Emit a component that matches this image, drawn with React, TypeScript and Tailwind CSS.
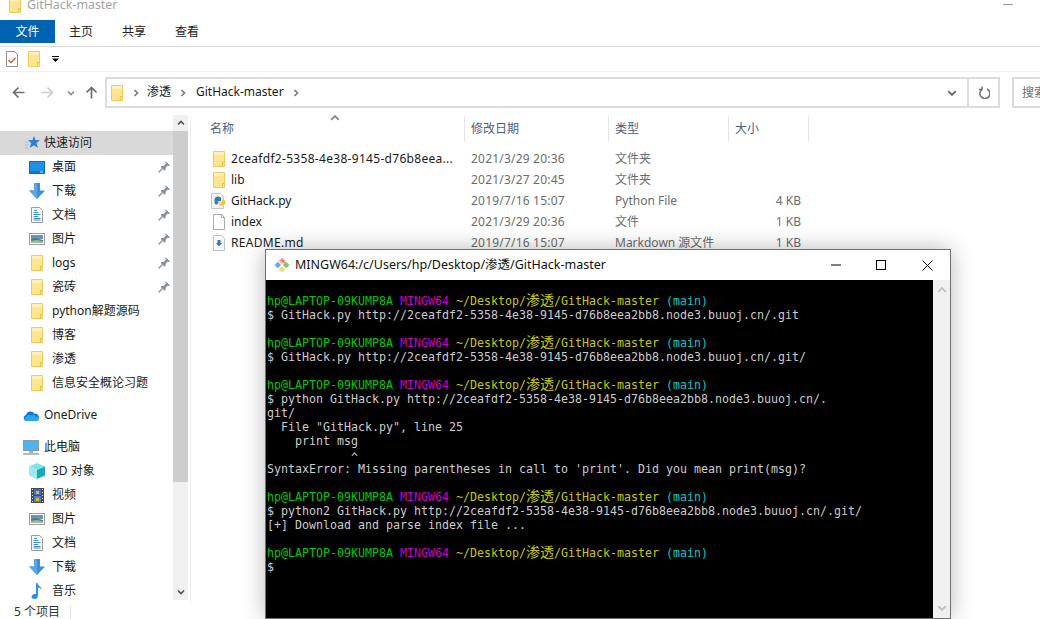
import React from 'react';

const uiFont = { fontFamily: '"Noto Sans", "Noto Sans CJK SC", sans-serif' };

const Folder = () => (
  <svg width="14" height="18" viewBox="0 0 14 18" className="shrink-0">
    <path d="M1.500 1.500h11v15h-11z" fill="#fee58f" stroke="#eecb5c" />
    <path d="M10.500 16.500v-4h2" fill="none" stroke="#e8bf45" />
    <path d="M2 2h10v3H2z" fill="#fff0ba" />
  </svg>
);

const Pin = () => (
  <svg width="12" height="12" viewBox="0 0 12 12">
    <path d="M7.500 0L12 4.500l-1.200.5-1.300-.2-2 2.200.1 2-1 .8L2.700 5.900l.8-1 2 .1 2.200-2-.2-1.300z" fill="#85909a" />
    <path d="M4.500 7.500L.5 11.500" stroke="#85909a" strokeWidth="1.300" />
  </svg>
);

const Desktop = () => (
  <svg width="16" height="13" viewBox="0 0 16 13">
    <rect x="0.500" y="0.500" width="15" height="12" fill="#1e90e8" stroke="#0b6cc0" />
    <path d="M1 11h14" stroke="#0a5da8" />
    <path d="M11 11h3" stroke="#bfe3fb" />
  </svg>
);

const Download = () => (
  <svg width="16" height="16" viewBox="0 0 16 16">
    <path d="M5 0h6v7.500h5L8 16 0 7.500h5z" fill="#3d8edb" />
    <path d="M5 0h3v16L0 7.500h5z" fill="#5ba6ea" />
  </svg>
);

const Doc = () => (
  <svg width="12" height="16" viewBox="0 0 12 16">
    <path d="M.5.500h8l3 3v12H.5z" fill="#fff" stroke="#9a9a9a" />
    <path d="M6 3.500h-3M7.500 5.500h-5M9.500 7.500h-7M7 9.500H2.500M9.500 11.500h-7M9.500 13h-7" stroke="#3a8fd6" />
  </svg>
);

const Picture = () => (
  <svg width="16" height="12" viewBox="0 0 16 12">
    <rect x="0.500" y="0.500" width="15" height="11" fill="#fff" stroke="#9c9c9c" />
    <rect x="2" y="2" width="12" height="4" fill="#6d93c5" />
    <path d="M2 6l4-1 8 2v3H2z" fill="#4f7f6d" />
    <path d="M2 8l6-1 6 1.500V10H2z" fill="#a4b9a0" />
  </svg>
);

const Star = () => (
  <svg width="15" height="14" viewBox="0 0 15 14">
    <path d="M9 0l1.500 4 4.500.2-3.500 2.900L12.800 12 9 9.300 4.700 12l1.500-4.900L3 4.200l4.500-.2z" fill="#2f7fd1" />
    <path d="M0 6h3M0 9h3M0 12h3" stroke="#8fc1ee" />
  </svg>
);

const Cloud = () => (
  <svg width="16" height="11" viewBox="0 0 16 11">
    <path d="M3.500 11A3 3 0 0 1 3 5.100 4.500 4.500 0 0 1 11.400 3.800 3.600 3.600 0 0 1 13 11z" fill="#0f78d4" />
    <path d="M3.500 11A2 2 0 0 1 3.300 7 3 3 0 0 1 8 5.500c2-1.200 3.600-.6 4.200 1 2-.3 3.800.9 3.800 2.300 0 1.200-1 2.200-2.500 2.200z" fill="#28a8ea" />
  </svg>
);

const Pc = () => (
  <svg width="16" height="15" viewBox="0 0 16 15">
    <rect x="0.500" y="0.500" width="15" height="10" fill="#48b5ee" stroke="#8a9aa8" />
    <path d="M6 11h4v2H6z" fill="#9eb3c4" />
    <path d="M0 14h16" stroke="#8ea3b5" strokeWidth="1.500" />
  </svg>
);

const Cube = () => (
  <svg width="16" height="16" viewBox="0 0 16 16">
    <path d="M8 0l8 3.500-8 3.500L0 3.500z" fill="#7fe3ea" />
    <path d="M0 3.500l8 3.500v9l-8-3.500z" fill="#9fe9ee" />
    <path d="M16 3.500L8 7v9l8-3.500z" fill="#18a9bd" />
  </svg>
);

const Film = () => (
  <svg width="13" height="15" viewBox="0 0 13 15">
    <rect width="13" height="15" fill="#4a4a4a" />
    <rect x="3" y="1" width="7" height="6" fill="#3f6fc4" />
    <rect x="3" y="8" width="7" height="6" fill="#4f7fd0" />
    <path d="M5 3h3v3H5zM5 10h3v3H5z" fill="#e6b422" />
    <path d="M1 1h1v1H1zM1 4h1v1H1zM1 7h1v1H1zM1 10h1v1H1zM1 13h1v1H1zM11 1h1v1h-1zM11 4h1v1h-1zM11 7h1v1h-1zM11 10h1v1h-1zM11 13h1v1h-1z" fill="#ddd" />
  </svg>
);

const Music = () => (
  <svg width="12" height="16" viewBox="0 0 12 16">
    <path d="M5 0h1.500c.3 2.500 4 3.500 4.500 7-1.200-1.600-2.700-2.400-4-2.600V13c0 1.800-1.700 3-3.600 3C1.700 16 .5 15 .5 13.700c0-1.500 1.700-2.700 3.500-2.700.4 0 .7 0 1 .1z" fill="#2f8fe0" />
  </svg>
);

const PyFile = () => (
  <svg width="15" height="16" viewBox="0 0 15 16">
    <path d="M.5.500h9l3 3v12h-12z" fill="#f3f4f5" stroke="#c4c8cc" />
    <path d="M3.500 7c0-2.500 1.500-3.500 3.500-3.500s3 .8 3 2.200v2.300H6.500v.8h3.500c-2 .2-3.500.7-3.700 2.700H4.500C3.700 11 3.500 9 3.500 7z" fill="#3a78ad" />
    <path d="M14.500 9c0 2.500-1.500 3.500-3.500 3.500H10.500c-2 0-3-.6-3-2V10.500H11v-.8H8c2-.2 3-1 3.200-3H13.200c.9.500 1.300 1.300 1.300 2.300z" fill="#f2c63c" />
  </svg>
);

const BlankFile = () => (
  <svg width="12" height="16" viewBox="0 0 12 16">
    <path d="M.5.500h8l3 3v12H.5z" fill="#fff" stroke="#a8adb2" />
    <path d="M8.500.500v3h3" fill="none" stroke="#a8adb2" />
  </svg>
);

const MdFile = () => (
  <svg width="12" height="16" viewBox="0 0 12 16">
    <path d="M.5.500h8l3 3v12H.5z" fill="#f8f9fa" stroke="#bcc3c9" />
    <path d="M4.500 5h3v3H9l-3 3.500L3 8h1.500z" fill="#3a77ad" />
  </svg>
);

const GitLogo = () => (
  <svg width="16" height="16" viewBox="0 0 16 16">
    <path d="M8 .5l3.300 3.300L8 7.100 4.700 3.800z" fill="#f3a29a" />
    <path d="M12.200 4.800L15.500 8l-3.300 3.300L8.900 8z" fill="#84c46a" />
    <path d="M8 8.900l3.300 3.300L8 15.500l-3.300-3.300z" fill="#f7d873" />
    <path d="M3.800 4.800L7.100 8l-3.300 3.300L.5 8z" fill="#6fa5ec" />
    <path d="M8 2.800l3 3" stroke="#e2564a" strokeWidth="1.200" />
  </svg>
);

const Chevron = ({ dir, color = '#5f5f5f', size = 8 }: { dir: 'right' | 'down' | 'up'; color?: string; size?: number }) => {
  const d = dir === 'right' ? 'M2.500 1l3 3-3 3' : dir === 'down' ? 'M1 2.500l3 3 3-3' : 'M1 5.500l3-3 3 3';
  return (
    <svg width={size} height={size} viewBox="0 0 8 8">
      <path d={d} fill="none" stroke={color} strokeWidth="1.600" />
    </svg>
  );
};

const Arrow = ({ flip, color, up }: { flip?: boolean; color: string; up?: boolean }) => (
  <svg width="13" height="13" viewBox="0 0 13 13" className={flip ? 'rotate-180' : up ? 'rotate-90' : ''}>
    <path d="M12.500 6.500H1.500M6.500 1.500l-5 5 5 5" fill="none" stroke={color} strokeWidth="1.700" />
  </svg>
);

const navItem = (icon: React.ReactNode, label: string, pinned = false) => ({ icon, label, pinned });

const quick = [
  navItem(<Desktop />, '桌面', true),
  navItem(<Download />, '下载', true),
  navItem(<Doc />, '文档', true),
  navItem(<Picture />, '图片', true),
  navItem(<Folder />, 'logs', true),
  navItem(<Folder />, '瓷砖', true),
  navItem(<Folder />, 'python解题源码'),
  navItem(<Folder />, '博客'),
  navItem(<Folder />, '渗透'),
  navItem(<Folder />, '信息安全概论习题'),
];

const pc = [
  navItem(<Cube />, '3D 对象'),
  navItem(<Film />, '视频'),
  navItem(<Picture />, '图片'),
  navItem(<Doc />, '文档'),
  navItem(<Download />, '下载'),
  navItem(<Music />, '音乐'),
];

const files = [
  { icon: <Folder />, name: '2ceafdf2-5358-4e38-9145-d76b8eea...', nameClass: 'tracking-[0.3px]', date: '2021/3/29 20:36', type: '文件夹', size: '' },
  { icon: <Folder />, name: 'lib', nameClass: '', date: '2021/3/27 20:45', type: '文件夹', size: '' },
  { icon: <PyFile />, name: 'GitHack.py', nameClass: '', date: '2019/7/16 15:07', type: 'Python File', size: '4 KB' },
  { icon: <BlankFile />, name: 'index', nameClass: '', date: '2021/3/29 20:36', type: '文件', size: '1 KB' },
  { icon: <MdFile />, name: 'README.md', nameClass: 'tracking-[0.3px]', date: '2019/7/16 15:07', type: 'Markdown 源文件', size: '1 KB' },
];

const NavRow = ({ icon, label, pinned }: { icon: React.ReactNode; label: string; pinned: boolean }) => (
  <div className="flex h-6 items-center pr-[3px]">
    <div className="flex w-[52px] shrink-0 items-center justify-center pl-[26px] pr-[4px]">{icon}</div>
    <span className="flex-1 whitespace-nowrap text-[12px] text-[#1a1a1a]">{label}</span>
    {pinned && <Pin />}
  </div>
);

const Prompt = () => (
  <>
    <span className="text-[#00c800]">hp@LAPTOP-09KUMP8A</span>{' '}
    <span className="text-[#c800c8]">MINGW64</span>{' '}
    <span className="text-[#c8c800]">~/Desktop/<span className="text-[14px] leading-[0]" style={{ fontFamily: '"Noto Sans CJK SC"' }}>渗透</span>/GitHack-master</span>{' '}
    <span className="text-[#00c8c8]">(main)</span>
  </>
);

const Line = ({ children }: { children?: React.ReactNode }) => <div className="h-[14px] whitespace-pre">{children}</div>;

const Terminal = () => (
  <div className="absolute left-[265px] top-[249px] flex h-[370px] w-[686px] flex-col border border-[#707070] bg-white shadow-[0_0_22px_rgba(0,0,0,0.28)]">
    <div className="flex h-[30px] shrink-0 items-center pl-[8px]">
      <GitLogo />
      <span className="ml-[5px] flex-1 whitespace-nowrap text-[12.500px] text-[#111]">MINGW64:/c/Users/hp/Desktop/渗透/GitHack-master</span>
      <svg width="10" height="10" viewBox="0 0 10 10" className="mr-[35px]"><path d="M0 5h10" stroke="#000" /></svg>
      <svg width="10" height="10" viewBox="0 0 10 10" className="mr-[36px]"><rect x="0.500" y="0.500" width="9" height="9" fill="none" stroke="#000" /></svg>
      <svg width="11" height="11" viewBox="0 0 11 11" className="mr-[17px]"><path d="M.5.500l10 10M10.500.500l-10 10" stroke="#000" /></svg>
    </div>
    <div className="flex min-h-0 flex-1">
      <div className="flex-1 overflow-hidden bg-black pl-px pt-[14px] text-[11.630px] leading-[14px] text-[#cccccc]" style={{ fontFamily: '"DejaVu Sans Mono", monospace' }}>
        <Line><Prompt /></Line>
        <Line>$ GitHack.py http://2ceafdf2-5358-4e38-9145-d76b8eea2bb8.node3.buuoj.cn/.git</Line>
        <Line />
        <Line><Prompt /></Line>
        <Line>$ GitHack.py http://2ceafdf2-5358-4e38-9145-d76b8eea2bb8.node3.buuoj.cn/.git/</Line>
        <Line />
        <Line><Prompt /></Line>
        <Line>$ python GitHack.py http://2ceafdf2-5358-4e38-9145-d76b8eea2bb8.node3.buuoj.cn/.</Line>
        <Line>git/</Line>
        <Line>  File "GitHack.py", line 25</Line>
        <Line>    print msg</Line>
        <div className="h-[14px] whitespace-pre pt-[3px]">            ^</div>
        <Line>SyntaxError: Missing parentheses in call to 'print'. Did you mean print(msg)?</Line>
        <Line />
        <Line><Prompt /></Line>
        <Line>$ python2 GitHack.py http://2ceafdf2-5358-4e38-9145-d76b8eea2bb8.node3.buuoj.cn/.git/</Line>
        <Line>[+] Download and parse index file ...</Line>
        <Line />
        <Line><Prompt /></Line>
        <Line>$</Line>
      </div>
      <div className="flex w-[17px] shrink-0 flex-col items-center justify-between bg-[#f0f0f0] py-[5px]">
        <Chevron dir="up" color="#c2c2c2" size={10} />
        <Chevron dir="down" color="#c2c2c2" size={10} />
      </div>
    </div>
  </div>
);

export default function App() {
  return (
    <div className="relative flex h-[619px] w-[1040px] flex-col overflow-hidden bg-white" style={uiFont}>
      {/* title bar, cut off by the top of the shot */}
      <div className="flex h-5 shrink-0 items-start overflow-hidden pl-[8px]">
        <div className="-mt-[4px] flex items-center">
          <Folder />
          <span className="ml-[5px] text-[12.400px] text-[#a3a3a3]">GitHack-master</span>
        </div>
        <div className="ml-auto mr-[27px] mt-[4px] h-px w-[10px] bg-[#9a9a9a]" />
      </div>

      {/* ribbon tabs */}
      <div className="flex h-[27px] shrink-0 items-start border-b border-[#dadbdc] text-[12px] text-[#222]">
        <div className="flex h-[23px] w-[55px] items-center justify-center bg-[#0063b1] pt-px text-white">文件</div>
        <div className="ml-[14px] flex h-[23px] items-center pt-px">主页</div>
        <div className="ml-[29px] flex h-[23px] items-center pt-px">共享</div>
        <div className="ml-[29px] flex h-[23px] items-center pt-px">查看</div>
      </div>

      {/* quick access toolbar */}
      <div className="flex h-[25px] shrink-0 items-center border-b border-[#f0f0f0] pl-[6px]">
        <svg width="13" height="16" viewBox="0 0 13 16">
          <path d="M.5.500h8l3 3v12H.5z" fill="#fff" stroke="#8e8e8e" />
          <path d="M2.500 9l2.500 2.500L9.500 7" fill="none" stroke="#e0522c" strokeWidth="1.400" />
        </svg>
        <div className="ml-[8px]"><Folder /></div>
        <svg width="7" height="7" viewBox="0 0 7 7" className="ml-[11px]">
          <path d="M0 0h7v1H0zM0 2.500h7L3.500 6z" fill="#000" />
        </svg>
      </div>

      {/* address row */}
      <div className="flex h-[43px] shrink-0 items-start pt-[5px]">
        <div className="flex h-[31px] w-[105px] shrink-0 items-center pl-[12px]">
          <Arrow color="#6d6d6d" />
          <div className="ml-[16px] flex"><Arrow flip color="#cfcfcf" /></div>
          <div className="ml-[13px] flex"><Chevron dir="down" color="#8a8a8a" /></div>
          <div className="ml-[10px] flex"><Arrow up color="#6d6d6d" /></div>
        </div>
        <div className="flex h-[31px] w-[895px] shrink-0 items-center border-2 border-[#dcdcdc] text-[12px] text-[#1a1a1a]">
          <div className="ml-[3px] flex"><Folder /></div>
          <div className="ml-[8px] flex"><Chevron dir="right" color="#777" /></div>
          <span className="ml-[7px] pb-[2px]">渗透</span>
          <div className="ml-[8px] flex"><Chevron dir="right" color="#777" /></div>
          <span className="ml-[9px] pb-[2px]">GitHack-master</span>
          <div className="ml-[8px] flex"><Chevron dir="right" color="#777" /></div>
          <div className="ml-auto mr-[10px] flex"><Chevron dir="down" color="#6a6a6a" size={10} /></div>
          <div className="flex h-full w-[31px] items-center justify-center border-l-2 border-[#dcdcdc]">
            <svg width="12" height="13" viewBox="0 0 12 13">
              <path d="M3.500 3.200A5 5 0 1 0 8 3M3 .5v3h-3" transform="translate(1 0)" fill="none" stroke="#707070" strokeWidth="1.500" />
            </svg>
          </div>
        </div>
        <div className="ml-[12px] flex h-[31px] flex-1 items-center overflow-hidden whitespace-nowrap border-y-2 border-l-2 border-[#dcdcdc] pl-[8px] text-[12px] text-[#6d6d6d]">搜索</div>
      </div>

      {/* body */}
      <div className="flex min-h-0 flex-1">
        <div className="flex w-[191px] shrink-0 border-r border-[#f0f0f0]">
          <div className="w-[173px] shrink-0 overflow-hidden pt-[16px]">
            <div className="flex h-6 items-center bg-[#d9d9d9]">
              <div className="ml-[25px] flex w-[19px]"><Star /></div>
              <span className="text-[12px] text-[#1a1a1a]">快速访问</span>
            </div>
            {quick.map((item) => <NavRow key={item.label} {...item} />)}
            <div className="mt-[8px] flex h-6 items-center">
              <div className="ml-[23px] flex w-[21px]"><Cloud /></div>
              <span className="text-[12px] text-[#1a1a1a]">OneDrive</span>
            </div>
            <div className="mt-[8px] flex h-6 items-center">
              <div className="ml-[23px] flex w-[21px]"><Pc /></div>
              <span className="text-[12px] text-[#1a1a1a]">此电脑</span>
            </div>
            {pc.map((item) => <NavRow key={item.label} {...item} />)}
          </div>
          <div className="flex h-[485px] w-[15px] shrink-0 flex-col bg-[#f0f0f0]">
            <div className="flex h-[16px] items-center justify-center"><Chevron dir="up" color="#505050" /></div>
            <div className="h-[351px] bg-[#cdcdcd]" />
            <div className="mt-auto flex h-[16px] items-center justify-center"><Chevron dir="down" color="#505050" /></div>
          </div>
        </div>
        <div className="min-w-0 flex-1">
          <div className="relative flex h-[27px] items-center pt-px text-[12px] text-[#4c607a]">
            <div className="flex h-full w-[274px] shrink-0 items-center border-r border-[#e5e5e5] pl-[19px]">名称</div>
            <div className="flex h-full w-[144px] shrink-0 items-center border-r border-[#e5e5e5] pl-[6px]">修改日期</div>
            <div className="flex h-full w-[120px] shrink-0 items-center border-r border-[#e5e5e5] pl-[6px]">类型</div>
            <div className="flex h-full w-[80px] shrink-0 items-center border-r border-[#e5e5e5] pl-[6px]">大小</div>
            <div className="absolute left-[139px] top-[-2px] flex"><Chevron dir="up" color="#8a8a8a" size={10} /></div>
          </div>
          <div className="pt-[6px]">
            {files.map((f) => (
              <div key={f.name} className="flex h-[21px] items-center text-[12px] text-[#6d6d6d]">
                <div className="flex w-[40px] shrink-0 items-center justify-end pr-[5px]"><div className="flex w-[15px] justify-center">{f.icon}</div></div>
                <div className={`w-[234px] shrink-0 whitespace-nowrap text-[#1a1a1a] ${f.nameClass}`}>{f.name}</div>
                <div className="w-[144px] shrink-0 whitespace-nowrap pl-[6px] tracking-[0.2px]">{f.date}</div>
                <div className="w-[119px] shrink-0 whitespace-nowrap pl-[6px]">{f.type}</div>
                <div className="w-[73px] shrink-0 text-right">{f.size}</div>
              </div>
            ))}
          </div>
        </div>
      </div>

      {/* status bar */}
      <div className="flex h-[16px] shrink-0 items-center pt-[2px] text-[12px] text-[#333]">
        <span className="pl-[14px] pr-[10px]">5 个项目</span>
        <div className="h-[14px] w-px bg-[#e5e5e5]" />
      </div>

      <Terminal />
    </div>
  );
}
